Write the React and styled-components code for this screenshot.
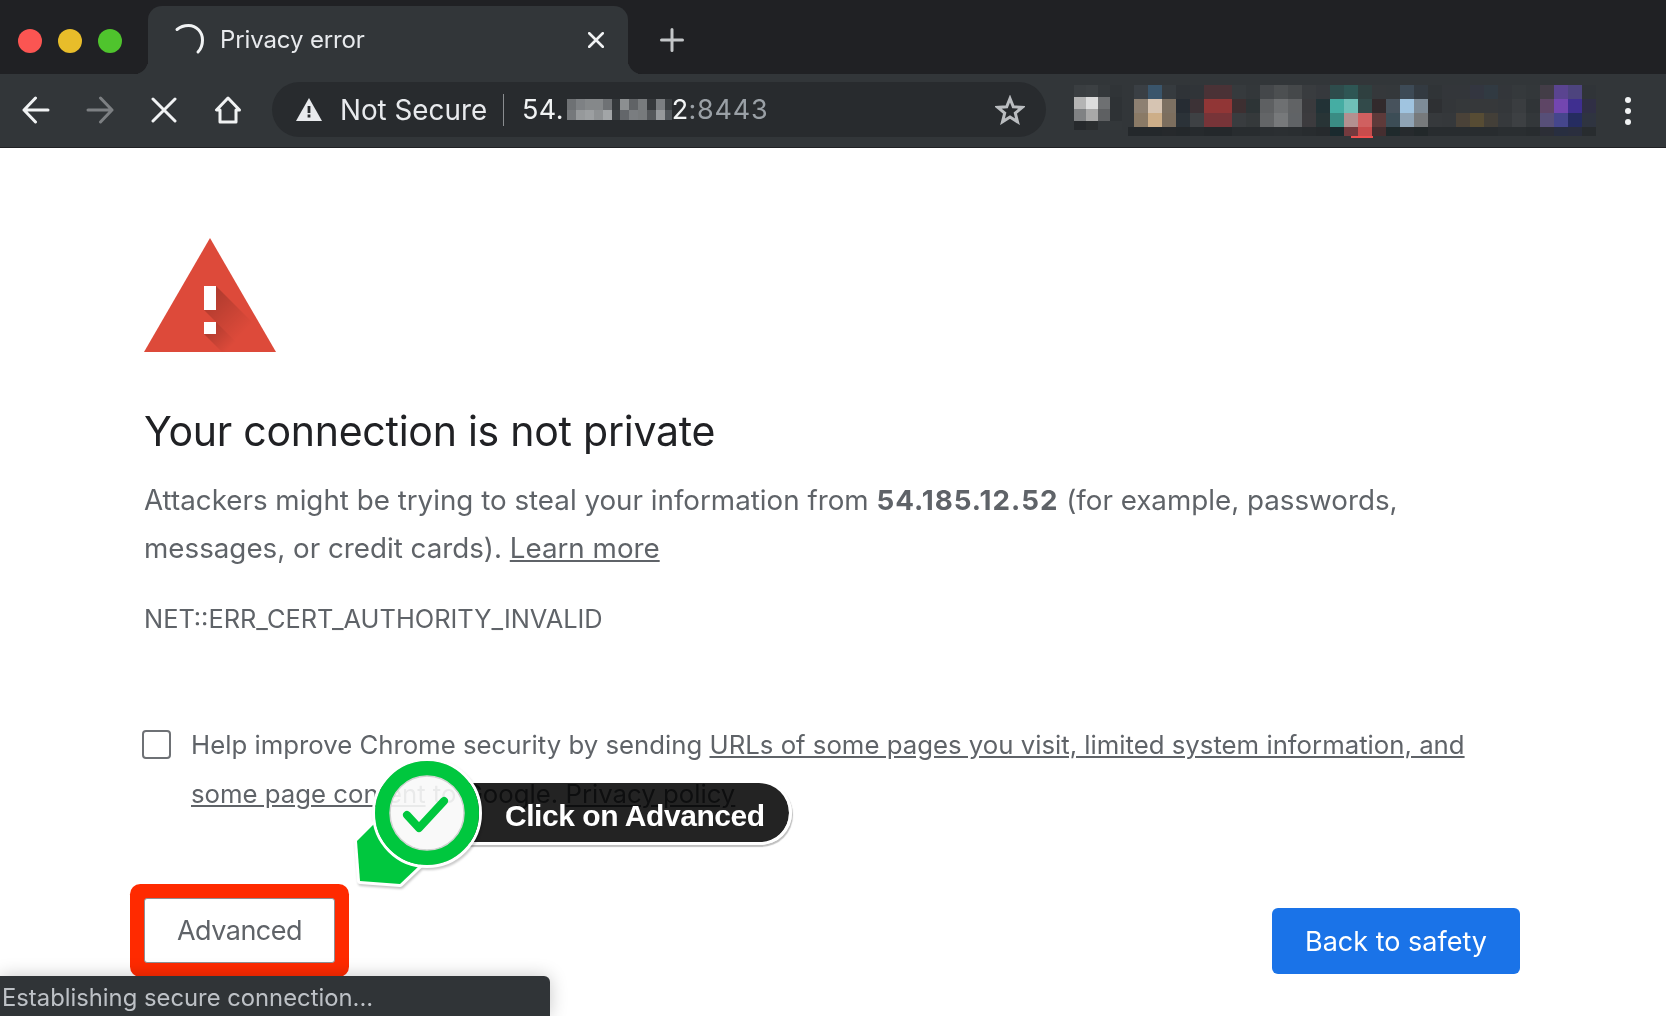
import React from 'react'
import styled, { createGlobalStyle } from 'styled-components'

const GlobalStyle = createGlobalStyle`
  html, body {
    margin: 0;
    height: 100%;
    overflow: hidden;
    background: #fff;
    font-family: Inter, "Liberation Sans", sans-serif;
  }
`

const STRIP = '#202124'
const TOOLBAR = '#323639'

// pixelated extensions area, one row per strip of cells
const EXT_A = [
  ['#3a3e41', '#3c4043', '#34383b', '#303437'],
  ['#b4b4b4', '#dcdcdc', '#6e7072', '#2e3235'],
  ['#808284', '#a8a8a8', '#5e6062', '#2e3235'],
  ['#26292c', '#2b2e30', '#33373a', '#33373a'],
]
const EXT_B = [
  ['#3a3f44', '#3a556b', '#363b3f', '#2f3337', '#303438', '#4a3236', '#4a3236', '#363a3d', '#33373a', '#44474a', '#4c4f51', '#45484a', '#393c3f', '#36393d', '#2e4c4c', '#2e5654', '#2f4040', '#35383b', '#34383b', '#3d4a56', '#333a41', '#303437', '#33363a', '#33363a', '#333640', '#313a42', '#33363a', '#35393c', '#33373a', '#433d47', '#5a4490', '#4d447e', '#303438'],
  ['#8d8072', '#d6c4b2', '#7c7062', '#262c33', '#3c3236', '#913636', '#913636', '#3d2f31', '#2d3436', '#5e6062', '#6e7072', '#616365', '#3a3a3d', '#223236', '#45ada3', '#6fc0b8', '#324a4a', '#322a2c', '#47525c', '#a0c4e0', '#7e8c98', '#2e3033', '#333639', '#35383a', '#36383a', '#36383a', '#34373a', '#3a3d40', '#303437', '#5e4565', '#7346b0', '#3f2f90', '#302f45'],
  ['#8a7a66', '#cdae88', '#7c6e5e', '#2b3238', '#3e4144', '#773438', '#773438', '#393c3f', '#35393b', '#636567', '#77797b', '#606366', '#3c3b3e', '#283436', '#3a8c84', '#b39090', '#d06060', '#5e3a3a', '#3c4d56', '#8fa3b4', '#777a7c', '#36393c', '#35383b', '#4a4238', '#574c34', '#433f38', '#36393c', '#3d4043', '#33373a', '#574f78', '#45468c', '#252c60', '#2f3440'],
  ['#24282b', '#24282b', '#26292c', '#24282b', '#262a2d', '#24282b', '#24282b', '#282c2f', '#282c2f', '#2a2e31', '#2b2f32', '#2a2e31', '#282c2f', '#262a2d', '#1a2a2e', '#733a3e', '#c84c4c', '#452e30', '#1f2a2c', '#262a2d', '#22282a', '#282c2f', '#282c2f', '#282c2f', '#282c2f', '#282c2f', '#2a2e31', '#2a2e31', '#282c2f', '#2c2e36', '#282e40', '#2a2e3e', '#282c2f'],
]
const IP_BLUR = [
  ['#6e7174', '#7e8184', '#85888a', '#85888a', '#6f7275', '#34383b', '#8c8f91', '#606366', '#787b7d', '#36393c', '#7b7e81', '#3a3e41'],
  ['#75787b', '#96999b', '#9c9fa1', '#8e9193', '#a2a5a7', '#3a3e41', '#63666a', '#7a7d80', '#777a7c', '#54575a', '#96999c', '#50555a'],
]

const Window = styled.div`
  width: 1666px;
  height: 1016px;
  position: relative;
  overflow: hidden;
  display: flex;
  flex-direction: column;
`

const TabStrip = styled.div`
  height: 74px;
  flex: none;
  background: ${STRIP};
  display: flex;
  align-items: flex-end;
`

const Lights = styled.div`
  width: 148px;
  height: 66px;
  flex: none;
  padding-left: 18px;
  box-sizing: border-box;
  display: flex;
  gap: 16px;
  align-items: flex-start;
  padding-top: 21px;
`

const Light = styled.span`
  width: 24px;
  height: 24px;
  border-radius: 50%;
  background: ${(p) => p.$color};
`

const Tab = styled.div`
  position: relative;
  width: 480px;
  height: 68px;
  flex: none;
  box-sizing: border-box;
  padding: 0 24px 0 24px;
  background: ${TOOLBAR};
  border-radius: 14px 14px 0 0;
  display: flex;
  align-items: center;
  color: #e8eaed;

  &::before,
  &::after {
    content: '';
    position: absolute;
    bottom: 0;
    width: 14px;
    height: 14px;
    background: ${STRIP};
  }
  &::before {
    left: -14px;
    border-bottom-right-radius: 14px;
    box-shadow: 4px 4px 0 ${TOOLBAR};
    clip-path: inset(0);
  }
  &::after {
    right: -14px;
    border-bottom-left-radius: 14px;
    box-shadow: -4px 4px 0 ${TOOLBAR};
    clip-path: inset(0);
  }
`

const TabTitle = styled.span`
  flex: 1;
  margin: -2px 0 0 16px;
  font-size: 24px;
  letter-spacing: -0.12px;
`

const NewTab = styled.div`
  margin-left: 28px;
  width: 32px;
  height: 68px;
  display: flex;
  align-items: center;
  justify-content: center;
`

const Toolbar = styled.div`
  height: 74px;
  flex: none;
  box-sizing: border-box;
  background: ${TOOLBAR};
  border-bottom: 1px solid ${STRIP};
  padding-left: 4px;
  display: flex;
  align-items: flex-start;
  position: relative;
`

const NavButton = styled.div`
  width: 64px;
  height: 72px;
  display: flex;
  align-items: center;
  justify-content: center;
`

const Omnibox = styled.div`
  width: 774px;
  height: 55px;
  margin: 8px 0 0 12px;
  flex: none;
  box-sizing: border-box;
  padding: 0 21px 0 24px;
  border-radius: 28px;
  background: #282b2e;
  display: flex;
  align-items: center;
`

const SecurityText = styled.span`
  margin-left: 18px;
  font-size: 27.8px;
  color: #e8eaed;
`

const Divider = styled.span`
  width: 1px;
  height: 32px;
  margin: 0 18px 0 16px;
  background: #8a8d90;
`

const Host = styled.span`
  font-size: 27px;
  letter-spacing: 0.3px;
  color: #f1f3f4;
`

const Port = styled.span`
  font-size: 27px;
  letter-spacing: 0.8px;
  color: #9aa0a6;
`

const Spacer = styled.span`
  flex: 1;
`

const IpMask = styled.svg`
  display: block;
  margin-left: 3px;
  flex: none;
`

const Extensions = styled.svg`
  display: block;
  flex: none;
  margin: 11px 0 0 28px;
`

const Menu = styled.div`
  position: absolute;
  right: 35px;
  top: 23px;
  display: flex;
  flex-direction: column;
  gap: 5px;

  span {
    width: 6px;
    height: 6px;
    border-radius: 50%;
    background: #f1f3f4;
  }
`

const Page = styled.main`
  flex: 1;
  background: #fff;
  box-sizing: border-box;
  padding: 90px 146px 0 144px;
  display: flex;
  flex-direction: column;
`

const Heading = styled.h1`
  margin: 52px 0 0;
  font-size: 41px;
  line-height: 52px;
  font-weight: 400;
  letter-spacing: -0.25px;
  color: #202124;
`

const Summary = styled.p`
  margin: 19px 0 0;
  max-width: 1300px;
  font-size: 27.75px;
  line-height: 48px;
  color: #5f6368;

  strong {
    font-weight: 700;
    letter-spacing: 1px;
  }
  a {
    color: inherit;
    text-decoration: underline;
  }
`

const ErrorCode = styled.div`
  margin-top: 30px;
  font-size: 25.4px;
  line-height: 34px;
  color: #5f6368;
`

const OptIn = styled.div`
  margin-top: 85px;
  max-width: 1345px;
  display: flex;
  align-items: flex-start;
  font-size: 25.76px;
  line-height: 48.5px;
  color: #5f6368;

  a {
    color: inherit;
    text-decoration: underline;
  }
`

const CheckBox = styled.span`
  width: 29px;
  height: 29px;
  flex: none;
  box-sizing: border-box;
  margin: 9px 20px 0 -2px;
  border: 2px solid #6e7175;
  border-radius: 4px;
`

const Actions = styled.div`
  margin-top: 80px;
  display: flex;
  justify-content: space-between;
  align-items: flex-start;
`

const AdvancedButton = styled.button`
  width: 191px;
  height: 65px;
  padding: 0;
  background: #fff;
  border: 1px solid #8d9095;
  border-radius: 3px;
  font: 400 27px Inter, "Liberation Sans", sans-serif;
  letter-spacing: -0.5px;
  color: #5f6368;
  box-shadow: 0 0 0 14px #ff2a00;
`

const SafetyButton = styled.button`
  width: 248px;
  height: 66px;
  margin-top: 10px;
  padding: 0;
  border: 0;
  border-radius: 6px;
  background: #1a73e8;
  font: 400 27px Inter, "Liberation Sans", sans-serif;
  color: #fff;
`

const Callout = styled.div`
  position: absolute;
  left: 350px;
  top: 755px;
  width: 445px;
  height: 140px;
`

const PillBack = styled.div`
  position: absolute;
  left: 116px;
  top: 28px;
  width: 323px;
  height: 60px;
  background: #232323;
  border-radius: 0 30px 30px 0;
  mix-blend-mode: multiply;
`

const PillEdge = styled.div`
  position: absolute;
  left: 116px;
  top: 26px;
  width: 326px;
  height: 64px;
  box-sizing: border-box;
  border: solid #fff;
  border-width: 0 3px 3px 0;
  border-radius: 0 33px 33px 0;
  box-shadow: 1px 2px 1px rgba(0, 0, 0, 0.25);
  clip-path: inset(2px -6px -6px 0);
`

const PillLabel = styled.div`
  position: absolute;
  left: 155px;
  top: 40px;
  font: 700 30px/42px "Liberation Sans", Arial, sans-serif;
  letter-spacing: -0.45px;
  color: #fff;
  white-space: nowrap;
`

const Badge = styled.svg`
  position: absolute;
  left: 0;
  top: 0;
  overflow: visible;
  filter: drop-shadow(1px 2px 1px rgba(0, 0, 0, 0.22));
`

const StatusBubble = styled.div`
  position: absolute;
  left: 0;
  bottom: 0;
  width: 550px;
  height: 40px;
  box-sizing: border-box;
  padding-left: 2px;
  background: #303437;
  border-radius: 0 6px 0 0;
  box-shadow: 0 0 18px rgba(0, 0, 0, 0.22);
  font-size: 23.8px;
  line-height: 44px;
  color: #bdc1c6;
`

const BackIcon = ({ color = '#f1f3f4', flip }) => (
  <svg width="28" height="28" viewBox="0 0 28 28" fill="none" stroke={color} strokeWidth="3" strokeLinecap="round" strokeLinejoin="round" style={flip ? { transform: 'scaleX(-1)' } : undefined}>
    <path d="M26 14H2M13.5 2 2 14l11.5 12" />
  </svg>
)

const CloseIcon = ({ size = 26, stroke = 3 }) => (
  <svg width={size} height={size} viewBox="0 0 26 26" fill="none" stroke="#f1f3f4" strokeWidth={(stroke * 26) / size} strokeLinecap="round">
    <path d="M2 2l22 22M24 2 2 24" />
  </svg>
)

const HomeIcon = () => (
  <svg width="28" height="28" viewBox="0 0 28 28" fill="none" stroke="#f1f3f4" strokeWidth="3" strokeLinejoin="round">
    <path d="M14 2 2.5 14H6v12h16V14h3.5z" />
  </svg>
)

const WarnIcon = () => (
  <svg width="26" height="23" viewBox="0 0 26 23">
    <path d="M13 0 26 23H0z" fill="#e8eaed" />
    <path d="M11.6 8h2.8v7h-2.8zM11.6 16.6h2.8v2.8h-2.8z" fill="#282b2e" />
  </svg>
)

const StarIcon = () => (
  <svg width="30" height="30" viewBox="0 0 30 30" fill="none" stroke="#babdc0" strokeWidth="3" strokeLinejoin="miter">
    <path d="M15 3.5l3.3 8.3 8.9.6-6.9 5.7 2.2 8.7-7.5-4.8-7.5 4.8 2.2-8.7-6.9-5.7 8.9-.6z" />
  </svg>
)

const WarningSign = () => (
  <svg width="132" height="115" viewBox="0 0 132 115">
    <defs>
      <linearGradient id="barFold" gradientUnits="userSpaceOnUse" x1="66" y1="60" x2="100" y2="94">
        <stop offset="0" stopColor="#000" stopOpacity="0.2" />
        <stop offset="1" stopColor="#000" stopOpacity="0" />
      </linearGradient>
      <linearGradient id="dotFold" gradientUnits="userSpaceOnUse" x1="66" y1="90" x2="86" y2="110">
        <stop offset="0" stopColor="#000" stopOpacity="0.2" />
        <stop offset="1" stopColor="#000" stopOpacity="0" />
      </linearGradient>
      <clipPath id="signShape">
        <path d="M66 0 132 114H0z" />
      </clipPath>
    </defs>
    <path d="M66 0 132 114H0z" fill="#dd4a3a" />
    <g clipPath="url(#signShape)">
      <path d="M72 48 138 114H102L60 72z" fill="url(#barFold)" />
      <path d="M72 84 102 114H78L60 96z" fill="url(#dotFold)" />
    </g>
    <path d="M60 48h12v24H60zM60 84h12v12H60z" fill="#fff" />
  </svg>
)

const Cells = ({ rows, x, y, w, heights }) => {
  let top = y
  return rows.map((row, r) => {
    const cellTop = top
    top += heights[r]
    return row.map((fill, c) => (
      <rect key={`${x}-${r}-${c}`} x={x + c * w} y={cellTop} width={w + 0.2} height={heights[r]} fill={fill} />
    ))
  })
}

const App = () => {
  return (
    <Window>
      <GlobalStyle />
      <TabStrip>
        <Lights>
          <Light $color="#fb5552" />
          <Light $color="#e8bd2a" />
          <Light $color="#4fc42d" />
        </Lights>
        <Tab>
          <svg width="32" height="32" viewBox="0 0 32 32" fill="none" stroke="#f1f3f4" strokeWidth="3" strokeLinecap="round">
            <path d="M5 5.5C8 3 12 1.5 16.5 1.5 24.5 1.5 30.5 8 30.5 16 30.5 20.5 29 25 26 28" />
          </svg>
          <TabTitle>Privacy error</TabTitle>
          <CloseIcon size={16} stroke={2.6} />
        </Tab>
        <NewTab>
          <svg width="24" height="24" viewBox="0 0 24 24" stroke="#c4c7c9" strokeWidth="3" strokeLinecap="round">
            <path d="M12 1.500v21M1.500 12h21" />
          </svg>
        </NewTab>
      </TabStrip>
      <Toolbar>
        <NavButton><BackIcon /></NavButton>
        <NavButton><BackIcon color="#7d8083" flip /></NavButton>
        <NavButton><CloseIcon /></NavButton>
        <NavButton><HomeIcon /></NavButton>
        <Omnibox>
          <WarnIcon />
          <SecurityText>Not Secure</SecurityText>
          <Divider />
          <Host>54.</Host>
          <IpMask width="105" height="21" viewBox="0 0 106 21" preserveAspectRatio="none" shapeRendering="crispEdges">
            <Cells rows={IP_BLUR} x={0} y={0} w={9} heights={[10.5, 10.5]} />
          </IpMask>
          <Host>2</Host>
          <Port>:8443</Port>
          <Spacer />
          <StarIcon />
        </Omnibox>
        <Extensions width="522" height="53" viewBox="0 0 522 53" shapeRendering="crispEdges">
          <Cells rows={EXT_A} x={0} y={0} w={12} heights={[12, 12, 12, 9]} />
          <Cells rows={EXT_B} x={60} y={0} w={14} heights={[14, 14, 14, 9]} />
          <rect x={54} y={42} width={6} height={9} fill="#24282b" />
          <rect x={277} y={51} width={22} height={2} fill="#f05050" />
        </Extensions>
        <Menu>
          <span />
          <span />
          <span />
        </Menu>
      </Toolbar>
      <Page>
        <WarningSign />
        <Heading>Your connection is not private</Heading>
        <Summary>
          Attackers might be trying to steal your information from <strong>54.185.12.52</strong> (for example, passwords, messages, or credit cards). <a href="#learn">Learn more</a>
        </Summary>
        <ErrorCode>NET::ERR_CERT_AUTHORITY_INVALID</ErrorCode>
        <OptIn>
          <CheckBox />
          <span>
            Help improve Chrome security by sending <a href="#urls">URLs of some pages you visit, limited system information, and some page content</a> to Google. <a href="#privacy">Privacy policy</a>
          </span>
        </OptIn>
        <Actions>
          <AdvancedButton>Advanced</AdvancedButton>
          <SafetyButton>Back to safety</SafetyButton>
        </Actions>
      </Page>
      <Callout>
        <PillBack />
        <PillEdge />
        <Badge width="130" height="135" viewBox="0 0 130 135">
          <path d="M25 68 7 86l3 40 40 3 20-19z" fill="#00c73e" stroke="#fff" strokeWidth="6" strokeLinejoin="round" paintOrder="stroke" />
          <circle cx="77" cy="58" r="53.5" fill="none" stroke="#fff" strokeWidth="3" />
          <circle cx="77" cy="58" r="37" fill="#fff" fillOpacity="0.88" />
          <circle cx="77" cy="58" r="44.5" fill="none" stroke="#00c73e" strokeWidth="15" />
          <circle cx="77" cy="58" r="37" fill="none" stroke="#d2d2d2" strokeWidth="1.5" />
          <path d="M57 60 69 73 94 46" fill="none" stroke="#00c73e" strokeWidth="8" strokeLinecap="round" strokeLinejoin="round" />
        </Badge>
        <PillLabel>Click on Advanced</PillLabel>
      </Callout>
      <StatusBubble>Establishing secure connection...</StatusBubble>
    </Window>
  )
}

export default App
